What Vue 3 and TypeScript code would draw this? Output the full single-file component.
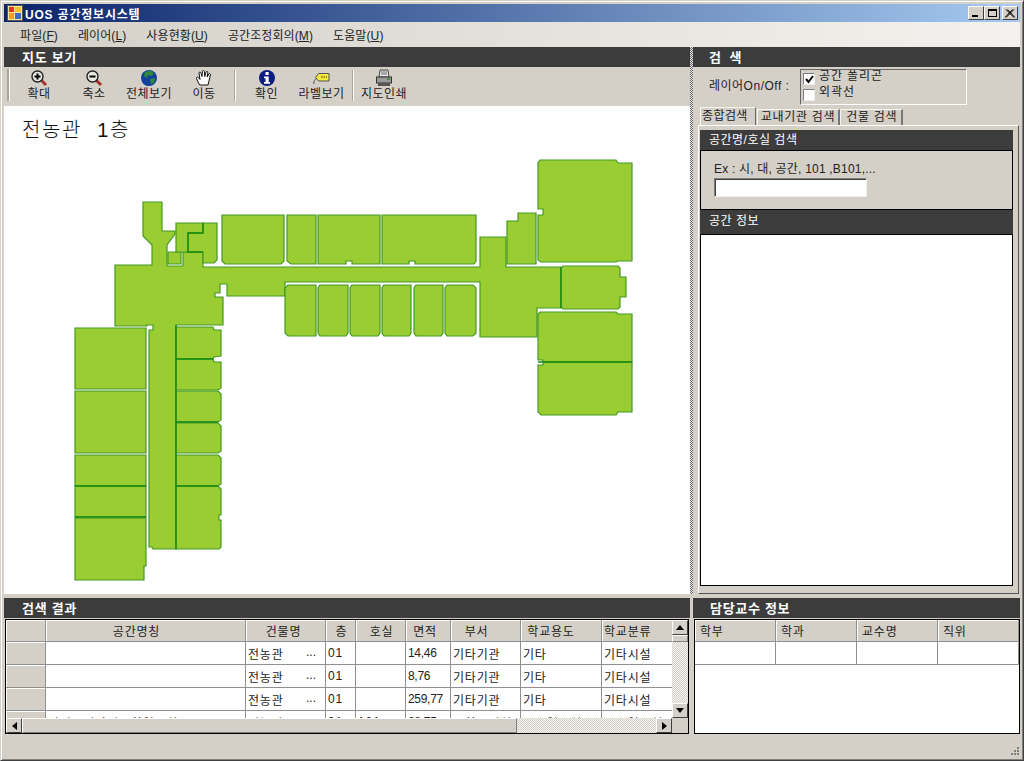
<script setup lang="ts">
const menus = [
  { label: "파일", key: "F" },
  { label: "레이어", key: "L" },
  { label: "사용현황", key: "U" },
  { label: "공간조정회의", key: "M" },
  { label: "도움말", key: "U" },
];

// pad: 헤더 글자가 가운데에서 왼쪽으로 밀린 만큼
const leftColumns = [
  { title: "공간명칭", width: 200, pad: 20 },
  { title: "건물명", width: 80, pad: 6 },
  { title: "층", width: 30, pad: 0 },
  { title: "호실", width: 50, pad: 0 },
  { title: "면적", width: 45, pad: 8 },
  { title: "부서", width: 70, pad: 20 },
  { title: "학교용도", width: 81, pad: 22 },
  { title: "학교분류", width: 71, pad: 22 },
];

const rows = [
  ["", "전농관", "01", "", "14,46", "기타기관", "기타", "기타시설"],
  ["", "전농관", "01", "", "8,76", "기타기관", "기타", "기타시설"],
  ["", "전농관", "01", "", "259,77", "기타기관", "기타", "기타시설"],
  ["라이프디자인공학연구실", "전농관", "01", "101", "68,75", "공학교정처", "교수연구실", "교수연구실"],
];

const profColumns = ["학부", "학과", "교수명", "직위"];

// 스크린샷 좌표 그대로 (viewBox 로 맞춤)
const rooms = [
  // 복도
  "143,202 162,202 162,231 175,231 175,234 167,245 167,266 183,266 183,252 203,252 203,267 480,267 480,237 506,237 506,267 561,267 561,308 537,308 537,337 480,337 480,282 285,282 285,296 227,296 227,284 220,284 220,293 215,293 215,297 223,297 223,325 176,325 176,549 153,549 152,547 149,547 149,330 153,330 153,325 147,325 147,326 115,326 115,265 152,265 152,245 143,236",
  "168,252 181,252 181,264 168,264",
  // 상단 실
  "222,215 284,215 284,261 281,264 225,264 222,261",
  "287,215 316,215 316,264 291,264 287,261",
  "318,215 380,215 380,264 352,264 352,261 346,261 346,264 318,264",
  "382,215 476,215 476,261 474,264 415,264 415,261 409,261 409,264 382,264",
  // 하단 실
  "288,285 316,285 316,336 288,336 285,333 285,288",
  "320,285 348,285 348,333 346,336 320,336 318,333 318,288",
  "352,285 380,285 380,333 378,336 352,336 350,333 350,288",
  "384,285 411,285 411,333 409,336 384,336 382,333 382,288",
  "416,285 443,285 443,333 441,336 416,336 414,333 414,288",
  "447,285 473,285 476,288 476,333 473,336 447,336 445,333 445,288",
  // 오른쪽
  "507,221 518,221 518,213 536,213 536,264 507,264",
  "540,160 616,160 618,163 632,163 632,261 618,261 616,262 541,262 538,260 538,215 543,215 543,209 538,209 538,163",
  "563,266 618,266 620,268 620,277 626,277 626,297 620,297 620,307 618,309 563,309 561,307 561,268",
  "540,312 616,312 618,314 632,314 632,362 543,362 543,360 538,360 538,314",
  "538,365 543,365 543,362 632,362 632,412 618,412 616,415 541,415 538,412",
  // 왼쪽
  "75,328 146,328 146,389 75,389",
  "75,391 146,391 146,453 75,453",
  "75,455 146,455 146,486 75,486",
  "75,486 146,486 146,517 75,517",
  "75,518 146,518 146,566 144,566 144,580 75,580",
  // 왼쪽 세로열
  "176,327 213,327 214,330 221,330 221,356 214,357 213,359 176,359",
  "176,359 213,359 214,362 221,362 221,388 218,390 176,390",
  "176,391 218,391 221,394 221,420 218,422 176,422",
  "176,423 218,423 221,426 221,451 218,453 176,453",
  "176,455 218,455 221,458 221,484 218,486 176,486",
  "176,486 218,486 221,489 221,515 219,515 219,520 221,520 221,547 219,549 176,549",
  // 상단 작은 실
  "176,223 203,223 203,233 188,233 188,252 176,252",
  "203,223 217,223 217,260 214,263 203,263 203,252 188,252 188,233 203,233",
];

// 진한 경계선
const walls = [
  "M176 325V549",
  "M176 359H213",
  "M176 422H218",
  "M176 486H218",
  "M75 486H146",
  "M75 517H146",
  "M203 223V233H188V252H203",
  "M538 362H632",
  "M561 267V308",
];
</script>

<template>
  <div class="window">
    <div class="titlebar">
      <svg class="app-icon" width="16" height="16" viewBox="0 0 16 16">
        <rect x="0.5" y="0.5" width="15" height="15" fill="#f6e6a0" stroke="#555" />
        <rect x="2" y="2" width="5" height="5" fill="#d83a20" />
        <rect x="8" y="2" width="6" height="5" fill="#f2c230" />
        <rect x="2" y="8" width="5" height="6" fill="#e8a020" />
        <rect x="8" y="8" width="6" height="6" fill="#3a6cc8" />
      </svg>
      <span class="title-text">UOS 공간정보시스템</span>
      <div class="window-buttons">
        <button class="win-btn"><i class="min-mark"></i></button>
        <button class="win-btn"><i class="max-mark"></i></button>
        <button class="win-btn close">
          <svg width="10" height="9" viewBox="0 0 10 9"><path d="M1 0.5L9 8.5M2.4 0.5L10 8.5M9 0.5L1 8.5M7.6 0.5L0 8.5" stroke="#000" fill="none" /></svg>
        </button>
      </div>
    </div>

    <div class="menubar">
      <span v-for="m in menus" :key="m.label" class="menu-item">{{ m.label }}(<u>{{ m.key }}</u>)</span>
    </div>

    <div class="main">
      <section class="left">
        <div class="band">지도 보기</div>
        <div class="toolbar">
          <i class="grip"></i>
          <div class="tool">
            <svg width="18" height="18" viewBox="0 0 18 18">
              <path d="M11 11L16 16" stroke="#a8322a" stroke-width="3" />
              <circle cx="7.5" cy="7.5" r="5.5" fill="#e8e8e0" stroke="#222" stroke-width="1.4" />
              <path d="M4.5 7.5H10.5M7.5 4.5V10.5" stroke="#000" stroke-width="2" />
            </svg>
            <span>확대</span>
          </div>
          <div class="tool">
            <svg width="18" height="18" viewBox="0 0 18 18">
              <path d="M11 11L16 16" stroke="#a8322a" stroke-width="3" />
              <circle cx="7.5" cy="7.5" r="5.5" fill="#e8e8e0" stroke="#222" stroke-width="1.4" />
              <path d="M4.5 7.5H10.5" stroke="#000" stroke-width="2" />
            </svg>
            <span>축소</span>
          </div>
          <div class="tool">
            <svg width="18" height="18" viewBox="0 0 18 18">
              <circle cx="9" cy="9" r="8" fill="#12409a" />
              <path d="M5 3L10 1.5L14 4L12 7L8 6L7 9L4 7ZM10 10L15 9L14 14L11 15Z" fill="#2f8a3a" />
              <path d="M2 12A8 8 0 0 0 10 17A9 9 0 0 1 2 12Z" fill="#0a1c50" />
            </svg>
            <span>전체보기</span>
          </div>
          <div class="tool">
            <svg width="18" height="18" viewBox="0 0 18 18">
              <path d="M4 15L1.5 9.5C1 8 3 7.8 3.8 9L5 10.5L4 4C4 2.8 5.6 2.8 6 4L7 7.5L7.4 2.4C7.6 1.2 9.2 1.2 9.4 2.4L9.8 7.5L11 3C11.4 2 12.8 2.2 12.8 3.4L12.2 8L13.8 5C14.4 4.2 15.8 4.6 15.4 6L14 12L13 16H5Z" fill="#fff" stroke="#111" stroke-width="1" />
            </svg>
            <span>이동</span>
          </div>
          <i class="tool-sep"></i>
          <div class="tool">
            <svg width="18" height="18" viewBox="0 0 18 18">
              <circle cx="9" cy="9" r="8" fill="#0c1c80" />
              <rect x="7.5" y="3" width="3.2" height="3" fill="#fff" />
              <path d="M6 7.5H10.7V13H12V14.8H6V13H7.5V9.2H6Z" fill="#fff" />
            </svg>
            <span>확인</span>
          </div>
          <div class="tool">
            <svg width="18" height="18" viewBox="0 0 18 18">
              <path d="M5.5 4.5H16V12H5.5L2.5 8.5Z" fill="#f4e83a" stroke="#555" />
              <path d="M8 8H14" stroke="#807010" stroke-width="1.5" stroke-dasharray="1.5 1" />
              <path d="M4 9C1 11 0 14 1.5 15" stroke="#444" fill="none" />
            </svg>
            <span>라벨보기</span>
          </div>
          <i class="tool-sep"></i>
          <div class="tool">
            <svg width="18" height="18" viewBox="0 0 18 18">
              <path d="M5 1H13L14 8H4Z" fill="#e8e8e8" stroke="#444" />
              <path d="M6 3H12M6 5H12" stroke="#666" />
              <rect x="1.5" y="8" width="15" height="6" fill="#9a9a9a" stroke="#333" />
              <rect x="3" y="14" width="12" height="3" fill="#555" />
              <path d="M12 10H15" stroke="#2a8a2a" stroke-width="1.5" />
            </svg>
            <span>지도인쇄</span>
          </div>
        </div>
        <div class="map">
          <div class="map-title">전농관 1층</div>
          <svg class="plan" width="686" height="488" viewBox="4 106 686 488">
            <polygon v-for="(p, i) in rooms" :key="i" :points="p" class="room" />
            <path v-for="(d, i) in walls" :key="'w' + i" :d="d" class="wall" />
          </svg>
        </div>
      </section>

      <i class="splitter"></i>

      <section class="right">
        <div class="band band-right">검 색</div>
        <div class="layer-row">
          <span class="layer-label">레이어On/Off :</span>
          <div class="layer-box">
            <label class="check">
              <i class="box">
                <svg width="9" height="9" viewBox="0 0 9 9"><path d="M1 4L3.5 7L8 1" stroke="#000" stroke-width="2" fill="none" /></svg>
              </i>
              공간 폴리곤
            </label>
            <label class="check"><i class="box"></i>외곽선</label>
          </div>
        </div>
        <div class="tabs">
          <span class="tab active">종합검색</span>
          <span class="tab">교내기관 검색</span>
          <span class="tab">건물 검색</span>
        </div>
        <div class="tab-pane">
          <div class="sub-band">공간명/호실 검색</div>
          <div class="search-box">
            <div class="hint">Ex : 시, 대, 공간, 101 ,B101,...</div>
            <input class="search-input" type="text" />
          </div>
          <div class="sub-band info-band">공간 정보</div>
          <div class="info-box"></div>
        </div>
      </section>
    </div>

    <div class="bottom">
      <section class="result">
        <div class="band">검색 결과</div>
        <div class="grid-frame">
          <div class="grid-top">
            <div class="viewport">
              <table class="grid-table">
                <colgroup>
                  <col style="width: 40px" />
                  <col v-for="c in leftColumns" :key="c.title" :style="{ width: c.width + 'px' }" />
                </colgroup>
                <thead>
                  <tr>
                    <th></th>
                    <th v-for="c in leftColumns" :key="c.title" :style="{ paddingRight: c.pad + 'px' }">{{ c.title }}</th>
                  </tr>
                </thead>
                <tbody>
                  <tr v-for="(r, i) in rows" :key="i">
                    <th></th>
                    <td v-for="(v, j) in r" :key="j" :class="{ num: j === 4 }">
                      <div v-if="j === 1" class="ellipsis-cell"><span>{{ v }}</span><span class="dots">...</span></div>
                      <template v-else>{{ v }}</template>
                    </td>
                  </tr>
                </tbody>
              </table>
            </div>
            <div class="vscroll">
              <button class="sb-btn">
                <svg width="8" height="5" viewBox="0 0 8 5"><path d="M4 0L8 5H0Z" /></svg>
              </button>
              <div class="sb-thumb-v"></div>
              <div class="sb-track"></div>
              <button class="sb-btn sb-btn-down">
                <svg width="8" height="5" viewBox="0 0 8 5"><path d="M0 0H8L4 5Z" /></svg>
              </button>
            </div>
          </div>
          <div class="hscroll">
            <button class="sb-btn sb-btn-h">
              <svg width="5" height="8" viewBox="0 0 5 8"><path d="M5 0V8L0 4Z" /></svg>
            </button>
            <div class="sb-thumb-h"></div>
            <div class="sb-track"></div>
            <button class="sb-btn sb-btn-h">
              <svg width="5" height="8" viewBox="0 0 5 8"><path d="M0 0L5 4L0 8Z" /></svg>
            </button>
            <div class="sb-corner"></div>
          </div>
        </div>
      </section>
      <section class="prof">
        <div class="band band-prof">담당교수 정보</div>
        <div class="prof-frame">
          <table class="grid-table prof-table">
            <thead>
              <tr><th v-for="c in profColumns" :key="c">{{ c }}</th></tr>
            </thead>
            <tbody>
              <tr><td v-for="c in profColumns" :key="c"></td></tr>
            </tbody>
          </table>
        </div>
      </section>
    </div>

    <div class="statusbar">
      <svg width="12" height="12" viewBox="0 0 12 12">
        <path d="M9 2h2v2H9zM6 5h2v2H6zM9 5h2v2H9zM3 8h2v2H3zM6 8h2v2H6zM9 8h2v2H9z" fill="#808080" />
      </svg>
    </div>
  </div>
</template>

<style scoped>
.window {
  box-sizing: border-box;
  width: 1024px;
  height: 761px;
  padding: 3px;
  border: 1px solid;
  border-color: #d4d0c8 #404040 #404040 #d4d0c8;
  box-shadow: inset 1px 1px 0 #fff, inset -1px -1px 0 #808080;
  background: #d4d0c8;
  display: flex;
  flex-direction: column;
  overflow: hidden;
  font-family: "Liberation Sans", "Noto Sans CJK KR", sans-serif;
  font-size: 12px;
  color: #111;
}

.titlebar {
  flex: 0 0 18px;
  display: flex;
  align-items: center;
  padding: 0 2px 0 3px;
  background: linear-gradient(90deg, #0a246a, #a6caf0);
  color: #fff;
}
.app-icon {
  flex: none;
  margin-right: 2px;
}
.title-text {
  font-weight: 700;
  font-size: 12px;
  letter-spacing: 0.8px;
}
.window-buttons {
  margin-left: auto;
  display: flex;
}
.win-btn {
  box-sizing: border-box;
  width: 16px;
  height: 14px;
  padding: 0;
  border: 1px solid;
  border-color: #fff #404040 #404040 #fff;
  background: #d4d0c8;
  position: relative;
  display: flex;
  align-items: center;
  justify-content: center;
}
.win-btn.close {
  margin-left: 2px;
}
.min-mark {
  position: absolute;
  left: 3px;
  bottom: 2px;
  width: 6px;
  height: 2px;
  background: #000;
}
.max-mark {
  width: 9px;
  height: 8px;
  box-sizing: border-box;
  border: 1px solid #000;
  border-top-width: 2px;
}

.menubar {
  flex: 0 0 25px;
  display: flex;
  align-items: center;
  gap: 20px;
  padding-left: 16px;
  background: linear-gradient(90deg, #d4d0c8, #f3f2ee);
}
.menu-item {
  color: #222;
  letter-spacing: 0.1px;
}

.main {
  flex: 0 0 547px;
  display: flex;
  min-height: 0;
}
.left {
  flex: 0 0 686px;
  display: flex;
  flex-direction: column;
}
.splitter {
  flex: 0 0 3px;
  background: repeating-conic-gradient(#666 0 25%, #e8e8e8 0 50%) 0 0 / 2px 2px;
}
.right {
  flex: 0 0 327px;
  display: flex;
  flex-direction: column;
  min-height: 0;
}

.band {
  flex: 0 0 20px;
  height: 20px;
  line-height: 21px;
  background: #3c3c3c;
  color: #fff;
  font-weight: 700;
  font-size: 13px;
  padding-left: 18px;
  letter-spacing: 0.7px;
}
.band-right {
  padding-left: 16px;
  letter-spacing: 2.5px;
}
.band-prof {
  padding-left: 17px;
}

.toolbar {
  flex: 0 0 39px;
  display: flex;
  align-items: stretch;
  padding-left: 2px;
}
.grip {
  flex: 0 0 2px;
  margin: 2px 2.5px 5px 1px;
  background: #a8a49c;
  box-shadow: 1px 0 0 #fff;
}
.tool {
  flex: 0 0 55px;
  display: flex;
  flex-direction: column;
  align-items: center;
  padding-top: 2px;
  line-height: 14px;
  letter-spacing: 0.4px;
  color: #222;
}
.tool svg {
  display: block;
  height: 18px;
}
.tool-sep {
  flex: 0 0 1px;
  margin: 3px 4px 5px 2.5px;
  background: #a8a49c;
  box-shadow: 1px 0 0 #fff;
}

.map {
  position: relative;
  flex: 1;
  background: #fff;
  min-height: 0;
}
.map-title {
  position: absolute;
  left: 18px;
  top: 11px;
  font-size: 20px;
  line-height: 26px;
  letter-spacing: 1.6px;
  word-spacing: 8px;
  color: #111;
  font-weight: 300;
}
.plan {
  display: block;
}
.room {
  fill: #9acd32;
  stroke: #439a24;
  stroke-width: 1.2;
}
.wall {
  fill: none;
  stroke: #138a10;
  stroke-width: 1.3;
}

.layer-row {
  flex: 0 0 40px;
  display: flex;
  align-items: flex-start;
  box-sizing: border-box;
  padding-top: 2px;
}
.layer-label {
  margin: 10px 0 0 16px;
  flex: 0 0 91px;
  color: #222;
  letter-spacing: 0.5px;
  line-height: 14px;
  white-space: nowrap;
}
.layer-box {
  box-sizing: border-box;
  width: 167px;
  height: 36px;
  border: 1px solid;
  border-color: #666 #fff #fff #666;
  padding-left: 2px;
  overflow: hidden;
}
.check {
  display: flex;
  align-items: flex-start;
  height: 16px;
  line-height: 14px;
  color: #222;
  letter-spacing: 0.9px;
}
.check:first-child {
  margin-top: -1px;
}
.box {
  box-sizing: border-box;
  flex: none;
  width: 12px;
  height: 12px;
  margin: 4px 4px 0 0;
  background: #fff;
  border: 1px solid;
  border-color: #808080 #eee #eee #808080;
  display: flex;
  align-items: center;
  justify-content: center;
}

.tabs {
  flex: 0 0 18px;
  display: flex;
  padding-left: 7px;
  align-items: flex-end;
}
.tab {
  box-sizing: border-box;
  height: 16px;
  line-height: 15px;
  padding: 0 3px;
  border-right: 2px solid #777;
  border-top: 1px solid #f4f4f0;
  border-left: 1px solid #f4f4f0;
  color: #222;
  letter-spacing: 0.7px;
}
.tab:last-child {
  padding: 0 4px 0 5px;
}
.tab.active {
  height: 18px;
  line-height: 16px;
  padding: 0 7px 0 1px;
  margin-right: 1px;
  border-right: 1px solid #666;
  letter-spacing: 0.4px;
}

.tab-pane {
  flex: 1;
  margin: 0 1px 0 5px;
  box-sizing: border-box;
  padding: 4px 5px 7px 1px;
  display: flex;
  flex-direction: column;
  border-top: 1px solid #fff;
  border-left: 1px solid #fff;
  border-right: 1px solid #555;
  border-bottom: 1px solid #555;
  min-height: 0;
}
.sub-band {
  flex: 0 0 20px;
  line-height: 20px;
  background: #3c3c3c;
  color: #fff;
  padding-left: 9px;
  letter-spacing: 0.5px;
}
.info-band {
  flex-basis: 24px;
  line-height: 23px;
}
.search-box {
  flex: 0 0 60px;
  box-sizing: border-box;
  border: 1px solid #000;
  padding: 11px 0 0 13px;
}
.hint {
  line-height: 14px;
  color: #222;
  letter-spacing: 0.2px;
}
.search-input {
  display: block;
  box-sizing: border-box;
  width: 153px;
  height: 19px;
  margin-top: 2px;
  padding: 0;
  border: 1px solid;
  border-color: #808080 #eee #eee #808080;
  box-shadow: inset 1px 1px 0 #404040;
  background: #fff;
}
.info-box {
  flex: 1;
  background: #fff;
  border: 1px solid #000;
}

.bottom {
  flex: 0 0 136px;
  margin-top: 4px;
  display: flex;
  gap: 3px;
}
.result {
  flex: 0 0 686px;
  display: flex;
  flex-direction: column;
}
.prof {
  flex: 0 0 327px;
  display: flex;
  flex-direction: column;
}
.grid-frame {
  flex: 1;
  min-height: 0;
  margin: 1px 1px 0 1px;
  box-sizing: border-box;
  border: 1px solid #000;
  display: flex;
  flex-direction: column;
  overflow: hidden;
}
.grid-top {
  flex: 0 0 98px;
  height: 98px;
  min-height: 0;
  display: flex;
  overflow: hidden;
}
.viewport {
  flex: 0 0 666px;
  height: 98px;
  overflow: hidden;
  background: #fff;
}
.grid-table {
  border-collapse: separate;
  border-spacing: 0;
  table-layout: fixed;
  width: 667px;
}
.grid-table th,
.grid-table td {
  box-sizing: border-box;
  height: 23px;
  padding: 0 0 0 2px;
  border-right: 1px solid #909090;
  border-bottom: 1px solid #909090;
  font-weight: 400;
  font-size: 12px;
  color: #222;
  white-space: nowrap;
  overflow: hidden;
  letter-spacing: 0.8px;
  background: #fff;
}
.grid-table th {
  background: #d4d0c8;
  box-shadow: inset 1px 1px 0 #fff;
  text-align: center;
}
.grid-table thead th {
  height: 22px;
}
.grid-table td.num {
  letter-spacing: -0.3px;
}
.ellipsis-cell {
  display: flex;
  justify-content: space-between;
  padding-right: 9px;
}
.dots {
  letter-spacing: 0;
}
.vscroll {
  flex: 0 0 16px;
  display: flex;
  flex-direction: column;
}
.sb-btn {
  flex: 0 0 15px;
  box-sizing: border-box;
  padding: 0;
  border: 1px solid;
  border-color: #fff #404040 #404040 #fff;
  background: #d4d0c8;
  display: flex;
  align-items: center;
  justify-content: center;
}
.sb-thumb-v {
  flex: 0 0 7px;
  box-sizing: border-box;
  border: 1px solid;
  border-color: #fff #808080 #808080 #fff;
  background: #d4d0c8;
}
.sb-track {
  flex: 1;
  background: repeating-conic-gradient(#d4d0c8 0 25%, #f4f4f0 0 50%) 0 0 / 2px 2px;
}
.hscroll {
  flex: 0 0 15px;
  display: flex;
}
.sb-btn-h {
  flex: 0 0 16px;
}
.sb-thumb-h {
  flex: 0 0 495px;
  box-sizing: border-box;
  border: 1px solid;
  border-color: #fff #808080 #808080 #fff;
  background: #d4d0c8;
}
.sb-corner {
  flex: 0 0 16px;
  background: #d4d0c8;
}

.prof-frame {
  flex: 1;
  margin: 1px 0 0 1px;
  box-sizing: border-box;
  background: #fff;
  border: 1px solid #000;
  min-height: 0;
}
.prof-table {
  width: 324px;
}
.prof-table th {
  text-align: left;
  padding-left: 5px;
}

.statusbar {
  flex: 1;
  display: flex;
  align-items: flex-end;
  justify-content: flex-end;
}
</style>

<style>
html,
body {
  margin: 0;
  background: #d4d0c8;
}
</style>
